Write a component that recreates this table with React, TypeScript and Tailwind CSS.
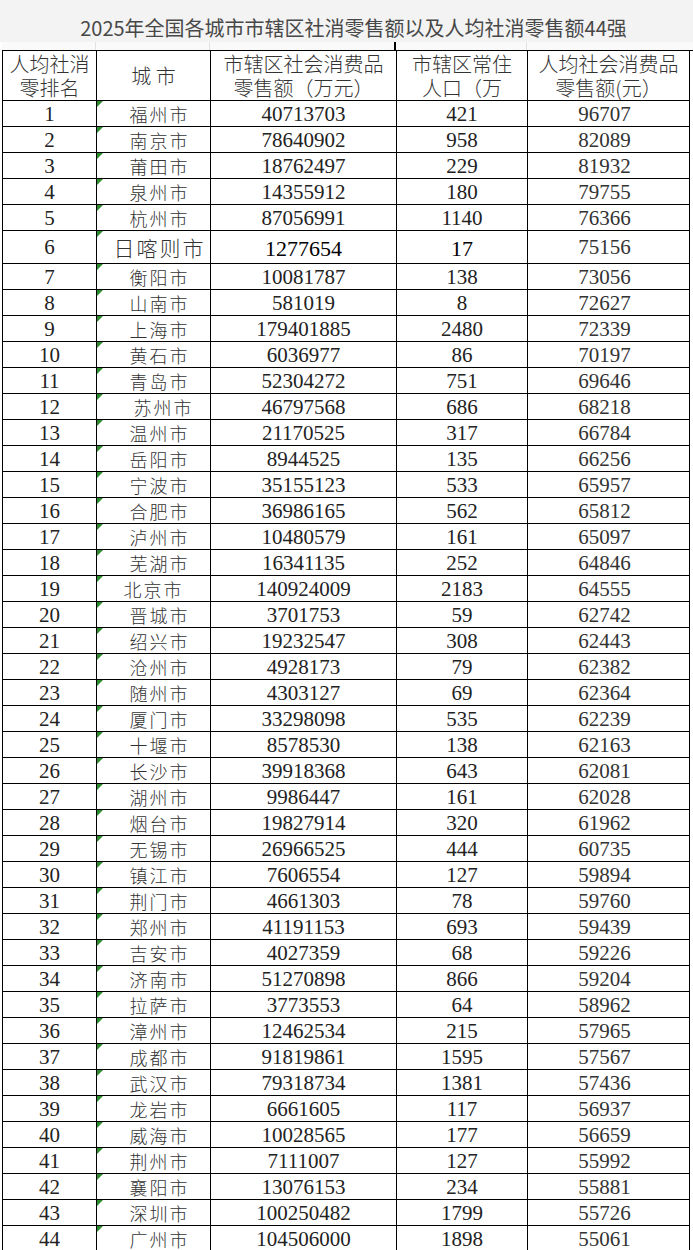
import React from 'react';

type Row = [number, string, string, string, string];

const rows: Row[] = [
  [1, '福州市', '40713703', '421', '96707'],
  [2, '南京市', '78640902', '958', '82089'],
  [3, '莆田市', '18762497', '229', '81932'],
  [4, '泉州市', '14355912', '180', '79755'],
  [5, '杭州市', '87056991', '1140', '76366'],
  [6, '日喀则市', '1277654', '17', '75156'],
  [7, '衡阳市', '10081787', '138', '73056'],
  [8, '山南市', '581019', '8', '72627'],
  [9, '上海市', '179401885', '2480', '72339'],
  [10, '黄石市', '6036977', '86', '70197'],
  [11, '青岛市', '52304272', '751', '69646'],
  [12, '苏州市', '46797568', '686', '68218'],
  [13, '温州市', '21170525', '317', '66784'],
  [14, '岳阳市', '8944525', '135', '66256'],
  [15, '宁波市', '35155123', '533', '65957'],
  [16, '合肥市', '36986165', '562', '65812'],
  [17, '泸州市', '10480579', '161', '65097'],
  [18, '芜湖市', '16341135', '252', '64846'],
  [19, '北京市', '140924009', '2183', '64555'],
  [20, '晋城市', '3701753', '59', '62742'],
  [21, '绍兴市', '19232547', '308', '62443'],
  [22, '沧州市', '4928173', '79', '62382'],
  [23, '随州市', '4303127', '69', '62364'],
  [24, '厦门市', '33298098', '535', '62239'],
  [25, '十堰市', '8578530', '138', '62163'],
  [26, '长沙市', '39918368', '643', '62081'],
  [27, '湖州市', '9986447', '161', '62028'],
  [28, '烟台市', '19827914', '320', '61962'],
  [29, '无锡市', '26966525', '444', '60735'],
  [30, '镇江市', '7606554', '127', '59894'],
  [31, '荆门市', '4661303', '78', '59760'],
  [32, '郑州市', '41191153', '693', '59439'],
  [33, '吉安市', '4027359', '68', '59226'],
  [34, '济南市', '51270898', '866', '59204'],
  [35, '拉萨市', '3773553', '64', '58962'],
  [36, '漳州市', '12462534', '215', '57965'],
  [37, '成都市', '91819861', '1595', '57567'],
  [38, '武汉市', '79318734', '1381', '57436'],
  [39, '龙岩市', '6661605', '117', '56937'],
  [40, '威海市', '10028565', '177', '56659'],
  [41, '荆州市', '7111007', '127', '55992'],
  [42, '襄阳市', '13076153', '234', '55881'],
  [43, '深圳市', '100250482', '1799', '55726'],
  [44, '广州市', '104506000', '1898', '55061'],
];

const cols = 'grid grid-cols-[94px_114px_186px_131px_162px]';
const cell = 'border-r border-b border-black flex items-center justify-center';
const num = "font-['Liberation_Serif',serif] text-[21px] text-[#222]";
const cjk = "font-['Noto_Sans_CJK_SC',sans-serif] font-light text-[#333]";

const Head: React.FC<{ a: string; b?: string }> = ({ a, b }) => (
  <div className={`${cell} h-[50px] ${cjk} text-[20px]`}>
    <p className="text-center leading-[24px]">
      {a}
      {b && <br />}
      {b}
    </p>
  </div>
);

const App: React.FC = () => {
  return (
    <div className="w-[693px] h-[1250px] overflow-hidden bg-white">
      <div className="h-[42px] bg-[#f3f3f3] flex items-end justify-center pb-[4px] pl-[14px]">
        <span className="font-['Noto_Sans_CJK_SC',sans-serif] text-[20px] text-[#484848] leading-none">
          2025年全国各城市市辖区社消零售额以及人均社消零售额44强
        </span>
      </div>

      {/* faint sheet grid strip above header */}
      <div className={`${cols} ml-[2px] h-[8px] bg-[#fafafa]`}>
        <div className="border-r border-[#e2e2e2]" />
        <div className="border-r border-[#e2e2e2]" />
        <div className="border-r-2 border-black" />
        <div className="border-r border-[#e2e2e2]" />
        <div />
      </div>

      <div className={`${cols} ml-[2px] border-t border-l border-black`}>
        <Head a="人均社消" b="零排名" />
        <Head a="城 市" />
        <Head a="市辖区社会消费品" b="零售额（万元）" />
        <Head a="市辖区常住" b="人口（万" />
        <Head a="人均社会消费品" b="零售额(元）" />

        {rows.map(([rank, city, sales, pop, per]) => {
          const tall = rank === 6;
          const h = tall ? 'h-[33px]' : 'h-[26px]';
          const shift = rank === 12 ? 'pl-[20px]' : rank === 19 ? 'pl-0' : 'pl-[12px]';
          return (
            <React.Fragment key={rank}>
              <div className={`${cell} ${h} ${num} pt-[2px]`}>{rank}</div>
              <div className={`${cell} ${h} relative ${shift}`}>
                <span className="absolute left-0 top-0 w-0 h-0 border-t-[6px] border-r-[6px] border-t-[#2e8b2e] border-r-transparent" />
                <span className={`${cjk} ${tall ? 'text-[21px]' : 'text-[18px]'} tracking-[2px] leading-none`}>{city}</span>
              </div>
              <div className={`${cell} ${h} ${num} pt-[2px] ${tall ? 'text-[22px] text-black' : ''}`}>{sales}</div>
              <div className={`${cell} ${h} ${num} pt-[2px] ${tall ? 'text-[22px] text-black' : ''}`}>{pop}</div>
              <div className={`${cell} ${h} ${num} pt-[2px] pr-[8px] text-[#333]`}>{per}</div>
            </React.Fragment>
          );
        })}
      </div>
    </div>
  );
};

export default App;
